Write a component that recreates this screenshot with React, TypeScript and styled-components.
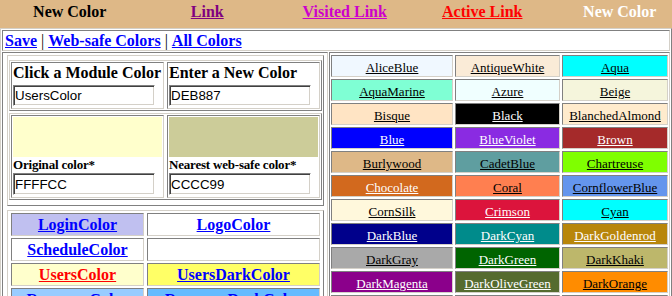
import React from "react";
import styled, { createGlobalStyle, css } from "styled-components";

const Global = createGlobalStyle`
  html, body { margin: 0; padding: 0; background: #fff; overflow: hidden; }
  body { font-family: "Liberation Serif", "Times New Roman", serif; }
`;

const inset = css`
  border: 1px solid;
  border-color: #808080 #d4d0c8 #d4d0c8 #808080;
`;
const outset = css`
  border: 1px solid;
  border-color: #d4d0c8 #808080 #808080 #d4d0c8;
`;

const Page = styled.div`
  width: 672px;
  height: 296px;
  overflow: hidden;
`;

const TopBar = styled.div`
  display: grid;
  grid-template-columns: repeat(5, 137.5px);
  width: 688.5px;
  height: 28px;
  padding-left: 1px;
  box-sizing: border-box;
  background: #deb887;
`;

const TopItem = styled.div<{ $color: string; $link?: boolean }>`
  padding-top: 3px;
  text-align: center;
  font-weight: bold;
  font-size: 16px;
  line-height: 18px;
  white-space: nowrap;
  color: ${(p) => p.$color};
  text-decoration: ${(p) => (p.$link ? "underline" : "none")};
`;

const OuterTable = styled.div`
  ${outset};
  width: 672px;
  box-sizing: border-box;
  padding: 1px;
  display: flex;
  flex-direction: column;
  gap: 1px;
`;

const NavCell = styled.div`
  ${inset};
  padding: 1px 2px 0;
  font-size: 16px;
  line-height: 18px;
  white-space: nowrap;
`;

const NavLink = styled.a`
  color: #0000ff;
  font-weight: bold;
  text-decoration: underline;
`;

const Sep = styled.span`
  color: #000;
`;

const MainRow = styled.div`
  display: grid;
  grid-template-columns: 326px 1fr;
  gap: 1px;
  align-items: start;
`;

const LeftCell = styled.div`
  ${inset};
  padding: 2px 3px 0 4px;
  display: flex;
  flex-direction: column;
  gap: 4px;
  height: 260px;
`;

const EditorFrame = styled.div`
  ${outset};
  padding: 4px 1px 5px;
  display: flex;
  flex-direction: column;
  gap: 2px;
`;

const EditorRow = styled.div`
  ${outset};
  padding: 1px;
  display: grid;
  grid-template-columns: 1fr 1fr;
  gap: 3px;
`;

const EditorCell = styled.div`
  ${inset};
  padding: 1px 1px 2px;
  display: flex;
  flex-direction: column;
  align-items: flex-start;
`;

const Heading = styled.div`
  font-weight: bold;
  font-size: 16px;
  line-height: 18px;
  white-space: nowrap;
  color: #000;
`;

const TextInput = styled.input<{ $top: number; $h: number }>`
  width: 142px;
  height: ${(p) => p.$h}px;
  box-sizing: border-box;
  margin: ${(p) => p.$top}px 0 0;
  padding: 0 1px;
  border: 1px solid;
  border-color: #808080 #ffffff #ffffff #808080;
  box-shadow: inset 1px 1px 0 #404040, inset -1px -1px 0 #d4d0c8;
  background: #fff;
  font-family: "Liberation Sans", Arial, sans-serif;
  font-size: 13.33px;
  color: #000;
  outline: none;
`;

const Swatch = styled.div<{ $bg: string }>`
  align-self: stretch;
  height: 40px;
  background: ${(p) => p.$bg};
`;

const SwatchLabel = styled.div`
  font-weight: bold;
  font-size: 13px;
  line-height: 15px;
  letter-spacing: -0.2px;
  white-space: nowrap;
  color: #000;
`;

const ModuleFrame = styled.div`
  ${outset};
  padding: 2px 3px;
  display: grid;
  grid-template-columns: 133px 1fr;
  grid-auto-rows: 23px;
  gap: 2px 3px;
`;

const ModuleCell = styled.div<{ $bg: string }>`
  ${inset};
  padding: 2px 2px 1px;
  background: ${(p) => p.$bg};
  text-align: center;
  font-weight: bold;
  font-size: 16px;
  line-height: 18px;
  white-space: nowrap;
`;

const ModuleLink = styled.a<{ $color: string }>`
  color: ${(p) => p.$color};
  text-decoration: underline;
`;

const RightCell = styled.div`
  ${inset};
  height: 260px;
`;

const ColorGrid = styled.div`
  padding: 2px 1px;
  display: grid;
  grid-template-columns: 122px 105px 106px;
  grid-auto-rows: 22px;
  gap: 2px;
`;

const ColorCell = styled.div<{ $bg: string }>`
  ${inset};
  padding: 4px 2px 1px;
  background: ${(p) => p.$bg};
  text-align: center;
  font-size: 13px;
  line-height: 15px;
  white-space: nowrap;
  overflow: hidden;
`;

const ColorLink = styled.a<{ $color: string }>`
  color: ${(p) => p.$color};
  text-decoration: underline;
`;

const topItems = [
  { text: "New Color", color: "#000000", link: false },
  { text: "Link", color: "#800080", link: true },
  { text: "Visited Link", color: "#cc00cc", link: true },
  { text: "Active Link", color: "#ff0000", link: true },
  { text: "New Color", color: "#ffffff", link: false },
];

const modules: { name: string; bg: string; color: string }[] = [
  { name: "LoginColor", bg: "#c0c0f0", color: "#0000ff" },
  { name: "LogoColor", bg: "#ffffff", color: "#0000ff" },
  { name: "ScheduleColor", bg: "#ffffff", color: "#0000ff" },
  { name: "", bg: "#ffffff", color: "#0000ff" },
  { name: "UsersColor", bg: "#ffffcc", color: "#ff0000" },
  { name: "UsersDarkColor", bg: "#ffff66", color: "#0000ff" },
  { name: "ResourceColor", bg: "#99ccff", color: "#0000ff" },
  { name: "ResourceDarkColor", bg: "#66bbff", color: "#0000ff" },
];

const W = "#ffffff";
const B = "#000000";
const colors: [string, string, string][] = [
  ["AliceBlue", "#f0f8ff", B],
  ["AntiqueWhite", "#faebd7", B],
  ["Aqua", "#00ffff", B],
  ["AquaMarine", "#7fffd4", B],
  ["Azure", "#f0ffff", B],
  ["Beige", "#f5f5dc", B],
  ["Bisque", "#ffe4c4", B],
  ["Black", "#000000", W],
  ["BlanchedAlmond", "#ffebcd", B],
  ["Blue", "#0000ff", W],
  ["BlueViolet", "#8a2be2", W],
  ["Brown", "#a52a2a", W],
  ["Burlywood", "#deb887", B],
  ["CadetBlue", "#5f9ea0", B],
  ["Chartreuse", "#7fff00", B],
  ["Chocolate", "#d2691e", W],
  ["Coral", "#ff7f50", B],
  ["CornflowerBlue", "#6495ed", B],
  ["CornSilk", "#fff8dc", B],
  ["Crimson", "#dc143c", W],
  ["Cyan", "#00ffff", B],
  ["DarkBlue", "#00008b", W],
  ["DarkCyan", "#008b8b", W],
  ["DarkGoldenrod", "#b8860b", W],
  ["DarkGray", "#a9a9a9", B],
  ["DarkGreen", "#006400", W],
  ["DarkKhaki", "#bdb76b", B],
  ["DarkMagenta", "#8b008b", W],
  ["DarkOliveGreen", "#556b2f", W],
  ["DarkOrange", "#ff8c00", B],
  ["DarkOrchid", "#9932cc", W],
  ["DarkRed", "#8b0000", W],
  ["DarkSalmon", "#e9967a", B],
];

export default function App() {
  return (
    <Page>
      <Global />
      <TopBar>
        {topItems.map((t, i) => (
          <TopItem key={i} $color={t.color} $link={t.link}>
            {t.text}
          </TopItem>
        ))}
      </TopBar>
      <OuterTable>
        <NavCell>
          <NavLink href="#">Save</NavLink>
          <Sep> | </Sep>
          <NavLink href="#">Web-safe Colors</NavLink>
          <Sep> | </Sep>
          <NavLink href="#">All Colors</NavLink>
        </NavCell>
        <MainRow>
          <LeftCell>
            <EditorFrame>
              <EditorRow>
                <EditorCell>
                  <Heading>Click a Module Color</Heading>
                  <TextInput $top={3} $h={21} defaultValue="UsersColor" />
                </EditorCell>
                <EditorCell>
                  <Heading>Enter a New Color</Heading>
                  <TextInput $top={3} $h={21} defaultValue="DEB887" />
                </EditorCell>
              </EditorRow>
              <EditorRow>
                <EditorCell>
                  <Swatch $bg="#ffffcc" />
                  <SwatchLabel>Original color*</SwatchLabel>
                  <TextInput $top={1} $h={22} defaultValue="FFFFCC" />
                </EditorCell>
                <EditorCell>
                  <Swatch $bg="#cccc99" />
                  <SwatchLabel>Nearest web-safe color*</SwatchLabel>
                  <TextInput $top={1} $h={22} defaultValue="CCCC99" />
                </EditorCell>
              </EditorRow>
            </EditorFrame>
            <ModuleFrame>
              {modules.map((m, i) => (
                <ModuleCell key={i} $bg={m.bg}>
                  {m.name && (
                    <ModuleLink href="#" $color={m.color}>
                      {m.name}
                    </ModuleLink>
                  )}
                </ModuleCell>
              ))}
            </ModuleFrame>
          </LeftCell>
          <RightCell>
            <ColorGrid>
              {colors.map(([name, bg, fg]) => (
                <ColorCell key={name} $bg={bg}>
                  <ColorLink href="#" $color={fg}>
                    {name}
                  </ColorLink>
                </ColorCell>
              ))}
            </ColorGrid>
          </RightCell>
        </MainRow>
      </OuterTable>
    </Page>
  );
}
